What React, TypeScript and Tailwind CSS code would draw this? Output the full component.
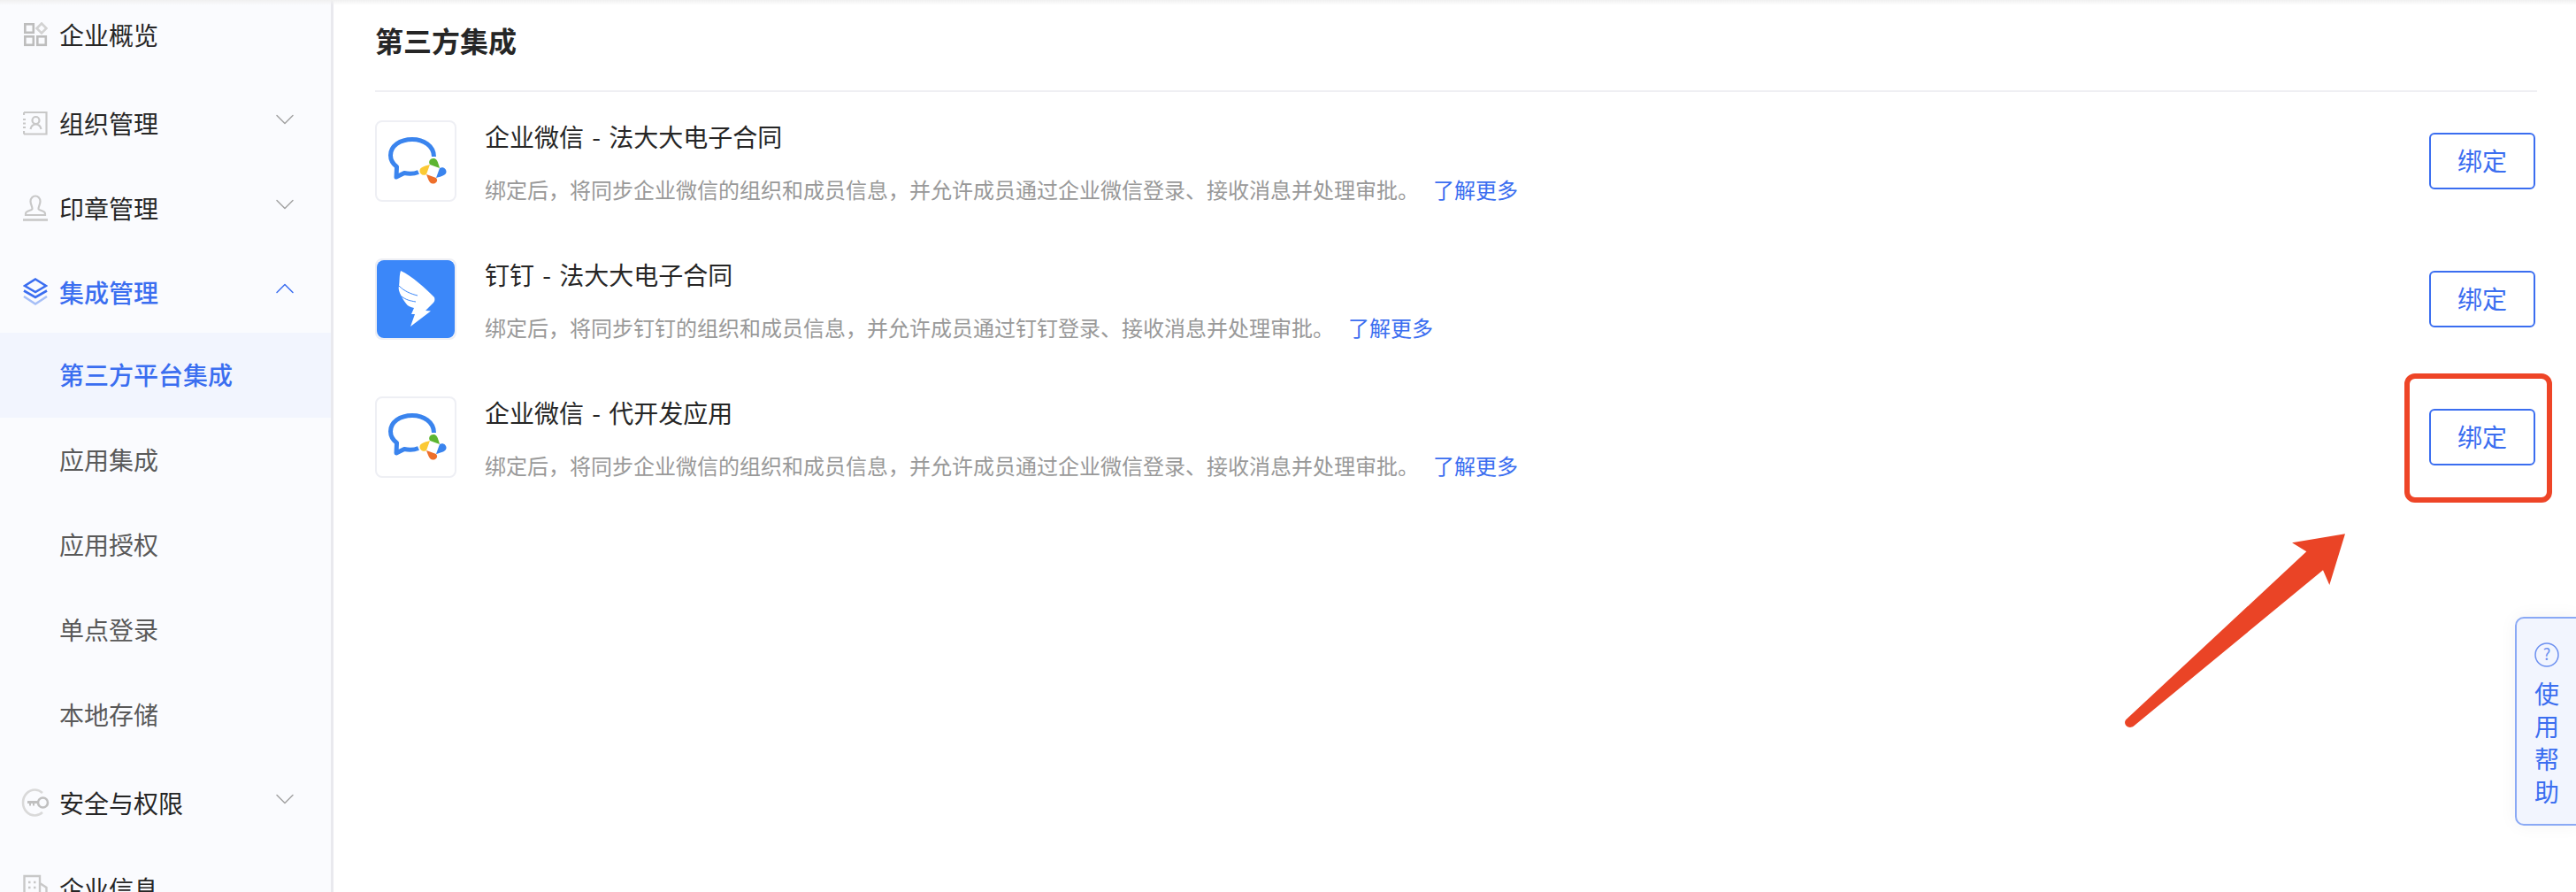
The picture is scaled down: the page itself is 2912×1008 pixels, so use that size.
import { ChevronDown, ChevronUp } from "lucide-react"
import { ReactNode } from "react"

const OverviewIcon = () => (
  <svg width="28" height="28" viewBox="0 0 28 28" fill="none" stroke="#bdbdbd" strokeWidth="2.6">
    <rect x="2.3" y="2.3" width="9.5" height="9.5" />
    <rect x="2.3" y="16.3" width="9.5" height="9.5" />
    <rect x="16.3" y="16.3" width="9.5" height="9.5" />
    <path d="M21 1.5 L26.5 7 L21 12.5 L15.5 7 Z" stroke="#d2d2d2" />
  </svg>
)

const ContactIcon = () => (
  <svg width="28" height="28" viewBox="0 0 28 28" fill="none" stroke="#c8c8c8" strokeWidth="2.2">
    <path d="M1 2 H26.5 V26.5 H1 M1 2 V5 M1 23 V26.5" />
    <path d="M0 10 H3 M0 14.5 H3 M0 19 H3" />
    <circle cx="14.5" cy="11" r="4" />
    <path d="M8.5 21 C9.5 16.5 12 15.5 14.5 15.5 C17 15.5 19.5 16.5 20.5 21" />
  </svg>
)

const StampIcon = () => (
  <svg width="28" height="30" viewBox="0 0 28 30" fill="none" stroke="#c8c8c8" strokeWidth="2.2">
    <path d="M10.5 16 C10.5 13 8.5 11 8.5 7.5 C8.5 4 11 1.5 14 1.5 C17 1.5 19.5 4 19.5 7.5 C19.5 11 17.5 13 17.5 16 C17.5 18 25 17.5 25 21.5 V23 H3 V21.5 C3 17.5 10.5 18 10.5 16 Z" />
    <path d="M0 28.5 H28" strokeWidth="2.6" />
  </svg>
)

const LayersIcon = () => (
  <svg width="28" height="32" viewBox="0 0 28 32" fill="none" strokeWidth="2.6">
    <path d="M14 1.5 L26 9 L14 16 L2 9 Z" stroke="#3b6ef0" />
    <path d="M1 14.5 L14 22 L27 14.5" stroke="#3b6ef0" />
    <path d="M1 21 L14 29.5 L27 21" stroke="#a6bff7" />
  </svg>
)

const KeyIcon = () => (
  <svg className="shrink-0" width="32" height="32" viewBox="0 0 32 32" fill="none">
    <path d="M24 5 C21.5 2.8 18.5 1.5 15.5 1.5 C8 1.5 2 8 2 16 C2 24 8 30.5 15.5 30.5 C18.5 30.5 21.5 29.2 24 27" stroke="#d9d9d9" strokeWidth="2.6" />
    <circle cx="24.5" cy="16" r="5.5" stroke="#c0c0c0" strokeWidth="2.6" />
    <path d="M7 14 H19 V17 H15 V19.5 H13 V17 H11 V19.5 H9 V17 H7 Z" fill="#c0c0c0" />
  </svg>
)

const BuildingIcon = () => (
  <svg width="28" height="32" viewBox="0 0 28 32" fill="none" stroke="#c8c8c8" strokeWidth="2.4">
    <path d="M1.5 32 V2 H19 V32 M19 10 L26.5 15 V32" />
    <path d="M6 9 H8.5 M12 9 H14.5 M6 15 H8.5 M12 15 H14.5" strokeDasharray="2.5 2" />
  </svg>
)

const WecomLogo = () => (
  <svg width="88" height="88" viewBox="2 2 88 88" fill="none">
    <path d="M66.5 41 C66.5 29 55 21.5 42 21.5 C28 21.5 17.5 29 17.5 39.5 C17.5 45.5 20 49 24.5 52.5 L24 64 L33 59.5 C38 60.5 44 60.5 49 58.5" stroke="#3a84ee" strokeWidth="5" strokeLinejoin="round" />
    <path d="M73 54 L62 50 C59.5 46 63 42.5 66.5 43 C70 43.5 71 47 73 54 Z" fill="#5cb531" />
    <path d="M69 65 L73 54 C77 51.5 81 55 80.5 58.5 C80 62 76 63 69 65 Z" fill="#3a84ee" />
    <path d="M58 61 L69 65 C72 68.5 68.5 72 65 71.5 C61.5 71 60.5 68 58 61 Z" fill="#ee6f2b" />
    <path d="M62 50 L58 61 C54 63.5 50 60 50.5 56.5 C51 53 55 52 62 50 Z" fill="#fbc933" />
  </svg>
)

const DingtalkLogo = () => (
  <svg width="88" height="88" viewBox="2 2 88 88" className="rounded-[8px]">
    <rect x="2" y="2" width="88" height="88" fill="#3b87f9" />
    <path
      d="M29 14 C42 20 56 33 67 44 C68 47 67 49 66 50 L57 59 L63 59.5 L40 77 L45 63 L41 63 L44 56 C40 55 37 54 35 51 C33 48 31 46 30 43 C27 38 26 34 27 31 C28 26 27 20 29 14 Z"
      fill="#ffffff"
    />
    <path d="M27 31 C33 37 40 40 48 42 M30 43 C35 47 40 48 46 49" stroke="#3b87f9" strokeWidth="1" fill="none" />
  </svg>
)

type NavItem = {
  label: string
  icon?: ReactNode
  height: string
  chevron?: "up" | "down"
  kind: "group" | "child" | "active" | "activeChild"
}

const navItems: NavItem[] = [
  { label: "企业概览", icon: <OverviewIcon />, height: "h-[80px] pb-[2px]", kind: "group" },
  { label: "组织管理", icon: <ContactIcon />, height: "h-[107px] pt-[10px]", chevron: "down", kind: "group" },
  { label: "印章管理", icon: <StampIcon />, height: "h-[96px]", chevron: "down", kind: "group" },
  { label: "集成管理", icon: <LayersIcon />, height: "h-[93px]", chevron: "up", kind: "active" },
  { label: "第三方平台集成", height: "h-[96px] pb-[2px]", kind: "activeChild" },
  { label: "应用集成", height: "h-[96px] pb-[2px]", kind: "child" },
  { label: "应用授权", height: "h-[96px] pb-[2px]", kind: "child" },
  { label: "单点登录", height: "h-[96px] pb-[2px]", kind: "child" },
  { label: "本地存储", height: "h-[96px] pb-[2px]", kind: "child" },
  { label: "安全与权限", icon: <KeyIcon />, height: "h-[104px] pb-[2px]", chevron: "down", kind: "group" },
  { label: "企业信息", icon: <BuildingIcon />, height: "h-[96px] pb-[8px]", kind: "group" },
]

const textClass = {
  group: "text-[#262626]",
  child: "text-[#595959]",
  active: "text-[#3b6ef0] font-medium",
  activeChild: "text-[#3b6ef0] font-medium",
}

const integrations = [
  {
    title: "企业微信 - 法大大电子合同",
    name: "企业微信",
    logo: <WecomLogo />,
  },
  {
    title: "钉钉 - 法大大电子合同",
    name: "钉钉",
    logo: <DingtalkLogo />,
  },
  {
    title: "企业微信 - 代开发应用",
    name: "企业微信",
    logo: <WecomLogo />,
  },
]

const App = () => {
  return (
    <div className="relative flex h-[1008px] w-[2912px] overflow-hidden bg-white font-['Noto_Sans_CJK_SC','Noto_Sans',sans-serif]">
      <aside className="h-full w-[377px] shrink-0 border-r-[3px] border-[#e9e9ee] bg-[#fafbfe]">
        {navItems.map((item) => (
          <div
            className={`flex items-center text-[28px] leading-[40px] ${item.height} ${item.kind === "activeChild" ? "bg-[#f2f5fe]" : ""}`}
            key={item.label}
          >
            <div className="flex w-[67px] shrink-0 pl-[26px]">
              <div className="flex w-[28px] justify-center">{item.icon}</div>
            </div>
            <span className={`flex-1 ${textClass[item.kind]}`}>{item.label}</span>
            {item.chevron === "down" && <ChevronDown className="mb-[8px] mr-[34px] text-[#a3a3a3]" size={36} strokeWidth={1} />}
            {item.chevron === "up" && <ChevronUp className="mb-[8px] mr-[34px] text-[#3b6ef0]" size={36} strokeWidth={1} />}
          </div>
        ))}
      </aside>

      <main className="flex-1 pl-[47px] pr-[44px]">
        <div className="flex h-[104px] items-start border-b-2 border-[#efeff3] pt-[22px]">
          <h1 className="text-[32px] font-bold leading-[46px] text-[#262626]">第三方集成</h1>
        </div>

        <div className="mt-[32px] flex flex-col gap-[64px]">
          {integrations.map((integration) => (
            <div className="flex h-[92px] items-start" key={integration.title}>
              <div className="flex h-[92px] w-[92px] shrink-0 items-center justify-center rounded-[8px] border-2 border-[#eeeff4] bg-white">
                {integration.logo}
              </div>
              <div className="ml-[32px] flex-1">
                <div className="text-[28px] leading-[36px] text-[#262626] [word-spacing:3px]">{integration.title}</div>
                <div className="mt-[24px] text-[24px] leading-[36px] text-[#999999]">
                  绑定后，将同步{integration.name}的组织和成员信息，并允许成员通过{integration.name}登录、接收消息并处理审批。
                  <a className="ml-[16px] text-[#3b6ef0]">了解更多</a>
                </div>
              </div>
              <button className="mr-[2px] mt-[14px] h-[64px] w-[120px] rounded-[6px] border-2 border-[#3b6ef0] bg-white pb-[2px] text-[28px] text-[#3b6ef0]">
                绑定
              </button>
            </div>
          ))}
        </div>
      </main>

      {/* 顶部阴影 */}
      <div className="absolute left-0 right-0 top-0 h-[6px] bg-gradient-to-b from-[#f0f0f0] to-transparent" />

      {/* 标注 */}
      <div className="absolute left-[2718px] top-[422px] h-[146px] w-[167px] rounded-[12px] border-[6px] border-[#ee4527]" />
      <svg className="absolute left-[2390px] top-[590px]" width="280" height="240" viewBox="2390 590 280 240">
        <path
          d="M2651 603.3 L2591 613.3 L2607.3 623.3 L2403.5 813 C2399 818 2406 825 2412 820.5 L2626 644.3 L2633.3 661 Z"
          fill="#ea4426"
        />
      </svg>

      {/* 使用帮助 */}
      <div className="absolute left-[2843px] top-[697px] flex h-[236px] w-[72px] flex-col items-center rounded-l-[10px] border-2 border-[#8aa9f5] bg-[#f2f5fe] pt-[27px] shadow-[0_0_20px_rgba(0,0,0,0.05)]">
        <svg width="28" height="28" viewBox="0 0 28 28" fill="none">
          <circle cx="14" cy="14" r="13" stroke="#6c90f0" strokeWidth="1.5" />
          <text x="14" y="20" textAnchor="middle" fontSize="18" fill="#6c90f0">?</text>
        </svg>
        <div className="mt-[11px] w-[28px] text-center text-[28px] leading-[37px] text-[#3b6ef0]">使用帮助</div>
      </div>
    </div>
  )
}

export default App
